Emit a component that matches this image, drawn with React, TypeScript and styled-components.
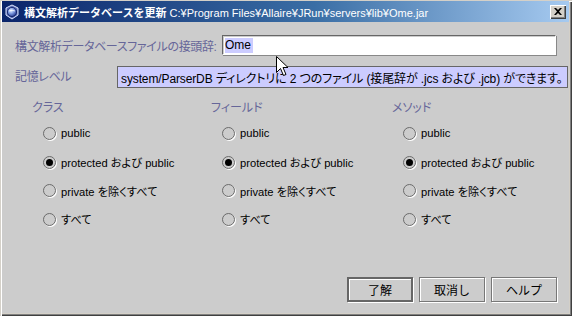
import React from 'react'
import styled, { createGlobalStyle } from 'styled-components'

const GlobalStyle = createGlobalStyle`
  html, body {
    margin: 0;
    padding: 0;
    background: #d4d0c8;
  }
  * {
    box-sizing: border-box;
  }
`

const FONT = `"Liberation Sans", "Noto Sans CJK JP", sans-serif`

type Level = 'public' | 'protected' | 'private' | 'all'

const options: { key: Level; label: string }[] = [
  { key: 'public', label: 'public' },
  { key: 'protected', label: 'protected および public' },
  { key: 'private', label: 'private を除くすべて' },
  { key: 'all', label: 'すべて' },
]

const groups = [
  { title: 'クラス', selected: 'protected' as Level },
  { title: 'フィールド', selected: 'protected' as Level },
  { title: 'メソッド', selected: 'protected' as Level },
]

function TitleIcon() {
  return (
    <svg width="16" height="16" viewBox="0 0 16 16">
      <defs>
        <radialGradient id="globe" cx="0.4" cy="0.35" r="0.7">
          <stop offset="0" stopColor="#e8f0ff" />
          <stop offset="0.45" stopColor="#7f9be0" />
          <stop offset="1" stopColor="#1c2f86" />
        </radialGradient>
      </defs>
      <path d="M8 1 L14 4 L14 11 L8 15 L2 11 L2 4 Z" fill="#5a6fb8" stroke="#dfe6ff" strokeWidth="1" />
      <circle cx="8" cy="8" r="4.6" fill="url(#globe)" stroke="#0d1b5c" strokeWidth="0.8" />
      <path d="M5 7 Q8 5.5 11 7" stroke="#ffffff" strokeWidth="0.8" fill="none" />
    </svg>
  )
}

function Pointer() {
  return (
    <svg width="13" height="21" viewBox="0 0 13 21">
      <path
        d="M0.5 0.5 L0.5 16.5 L4.5 12.5 L7.5 19.5 L10 18.5 L7 11.5 L12 11.5 Z"
        fill="#ffffff"
        stroke="#000000"
        strokeWidth="1"
        strokeLinejoin="miter"
      />
    </svg>
  )
}

export default function App() {
  return (
    <>
      <GlobalStyle />
      <Window>
        <TitleBar>
          <TitleIconWrapper>
            <TitleIcon />
          </TitleIconWrapper>
          <TitleText>
            <TitleMain>構文解析データベースを更新</TitleMain> C:¥Program Files¥Allaire¥JRun¥servers¥lib¥Ome.jar
          </TitleText>
          <CloseButton>
            <svg width="8" height="7" viewBox="0 0 8 7">
              <path d="M0 0 L2 0 L4 2 L6 0 L8 0 L5 3.5 L8 7 L6 7 L4 5 L2 7 L0 7 L3 3.5 Z" fill="#000" />
            </svg>
          </CloseButton>
        </TitleBar>

        <Content>
          <FieldRow>
            <FieldLabel>構文解析データベースファイルの接頭辞:</FieldLabel>
            <TextInput>
              <Selection>Ome</Selection>
            </TextInput>
          </FieldRow>

          <FieldRow $top={10}>
            <FieldLabel>記憶レベル</FieldLabel>
          </FieldRow>

          <Tooltip>system/ParserDB ディレクトリに 2 つのファイル (接尾辞が .jcs および .jcb) ができます。</Tooltip>

          <Columns>
            {groups.map((g) => (
              <Column key={g.title}>
                <GroupTitle>{g.title}</GroupTitle>
                <RadioList>
                  {options.map((o) => (
                    <RadioRow key={o.key}>
                      <RadioCircle $checked={o.key === g.selected} />
                      <RadioText>{o.label}</RadioText>
                    </RadioRow>
                  ))}
                </RadioList>
              </Column>
            ))}
          </Columns>

          <ButtonBar>
            <DialogButton $default>了解</DialogButton>
            <DialogButton>取消し</DialogButton>
            <DialogButton>ヘルプ</DialogButton>
          </ButtonBar>

          <CursorWrapper>
            <Pointer />
          </CursorWrapper>
        </Content>
      </Window>
    </>
  )
}

const Window = styled.div`
  width: 572px;
  height: 316px;
  display: flex;
  flex-direction: column;
  padding: 1px 3px 3px 2px;
  background: #d4d0c8;
  box-shadow: inset 1px 1px 0 #d4d0c8, inset 2px 2px 0 #ffffff, inset -1px -1px 0 #404040, inset -2px -2px 0 #808080;
  font-family: ${FONT};
  overflow: hidden;
`

const TitleBar = styled.div`
  height: 21px;
  display: flex;
  align-items: center;
  padding: 0 2px 0 2px;
  background: linear-gradient(to right, #0a246a 0%, #3a6ea5 55%, #a6caf0 100%);
  color: #ffffff;
`

const TitleIconWrapper = styled.div`
  width: 16px;
  height: 16px;
  display: flex;
  margin-right: 4px;
`

const TitleText = styled.div`
  flex: 1;
  font-size: 11px;
  white-space: nowrap;
`

const TitleMain = styled.span`
  font-weight: bold;
  font-size: 11px;
`

const CloseButton = styled.div`
  width: 16px;
  height: 14px;
  margin-right: 1px;
  display: flex;
  align-items: center;
  justify-content: center;
  background: #d4d0c8;
  box-shadow: inset 1px 1px 0 #ffffff, inset -1px -1px 0 #404040, inset -2px -2px 0 #808080;
`

const Content = styled.div`
  position: relative;
  flex: 1;
  display: flex;
  flex-direction: column;
  padding: 13px 12px 11px 13px;
  background: #cccccc;
`

const FieldRow = styled.div<{ $top?: number }>`
  display: flex;
  align-items: center;
  height: 20px;
  margin-top: ${({ $top }) => $top ?? 0}px;
`

const FieldLabel = styled.div`
  width: 207px;
  color: #666699;
  font-size: 12px;
  letter-spacing: -0.35px;
  white-space: nowrap;
  font-feature-settings: "palt";
`

const TextInput = styled.div`
  width: 334px;
  height: 20px;
  display: flex;
  align-items: center;
  padding-left: 2px;
  background: #ffffff;
  border-top: 1px solid #666666;
  border-left: 1px solid #666666;
  border-bottom: 1px solid #ffffff;
  border-right: 1px solid #ffffff;
  box-shadow: 1px 1px 0 #888888, inset 1px 1px 0 #cccccc;
  font-size: 12px;
  color: #000000;
`

const Selection = styled.span`
  background: #ccccff;
  padding-right: 2px;
  line-height: 15px;
`

const Tooltip = styled.div`
  position: absolute;
  left: 115px;
  top: 44px;
  width: 451px;
  height: 22px;
  display: flex;
  align-items: center;
  padding-left: 3px;
  background: #ccccff;
  border: 1px solid #666666;
  font-size: 12px;
  letter-spacing: -0.12px;
  color: #000000;
  white-space: nowrap;
  font-feature-settings: "palt";
`

const Columns = styled.div`
  display: grid;
  grid-template-columns: 179px 181px 1fr;
  margin: 15px 0 0 17px;
`

const Column = styled.div`
  display: flex;
  flex-direction: column;
`

const GroupTitle = styled.div`
  height: 16px;
  line-height: 16px;
  color: #666699;
  font-size: 12px;
  font-feature-settings: "palt";
`

const RadioList = styled.div`
  display: flex;
  flex-direction: column;
  margin-top: 3px;
  padding-left: 11px;
`

const RadioRow = styled.div`
  display: flex;
  align-items: center;
  height: 28.7px;
  gap: 5px;
`

const RadioCircle = styled.span<{ $checked: boolean }>`
  width: 13px;
  height: 13px;
  border-radius: 50%;
  display: flex;
  align-items: center;
  justify-content: center;
  background: #cccccc;
  border: 1px solid #6a6a6a;
  box-shadow: 1px 1px 0 #ffffff;

  &::after {
    content: '';
    display: ${({ $checked }) => ($checked ? 'block' : 'none')};
    width: 7px;
    height: 7px;
    border-radius: 50%;
    background: #000000;
  }
`

const RadioText = styled.span`
  font-size: 11.2px;
  color: #000000;
  white-space: nowrap;
  font-feature-settings: "palt";
`

const ButtonBar = styled.div`
  margin-top: auto;
  display: flex;
  justify-content: flex-end;
  gap: 6px;
`

const DialogButton = styled.div<{ $default?: boolean }>`
  width: 66px;
  height: 25px;
  display: flex;
  align-items: center;
  justify-content: center;
  font-size: 12px;
  color: #000000;
  background: #cccccc;
  border: ${({ $default }) => ($default ? '2px solid #666666' : '1px solid #777777')};
  box-shadow: 1px 1px 0 #ffffff, inset 1px 1px 0 #ffffff;
`

const CursorWrapper = styled.div`
  position: absolute;
  left: 274px;
  top: 34px;
  width: 13px;
  height: 21px;
  pointer-events: none;
`
